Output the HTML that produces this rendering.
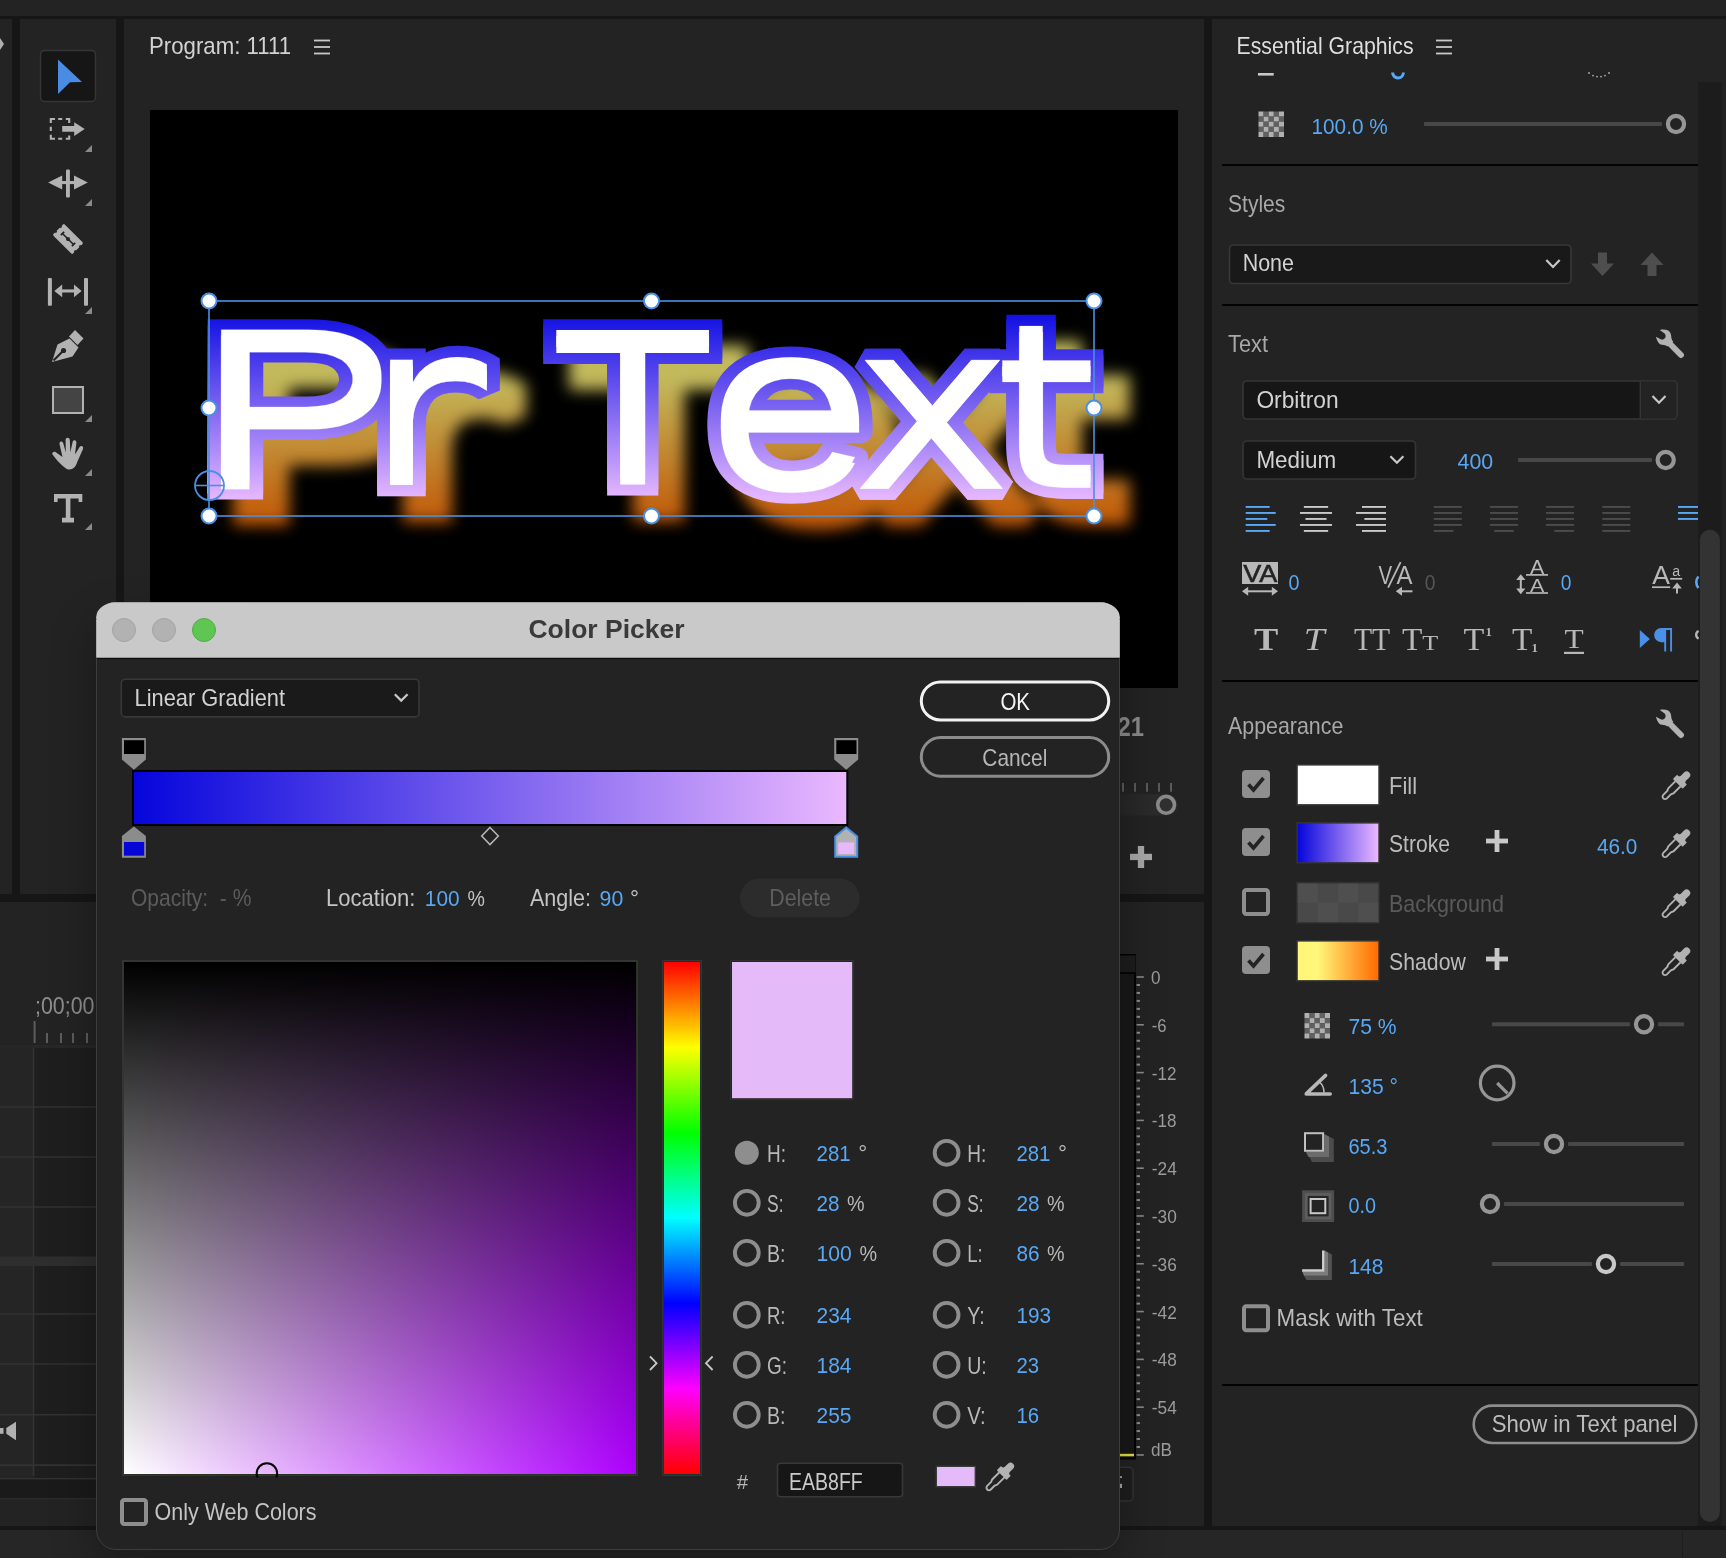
<!DOCTYPE html>
<html lang="en"><head><meta charset="utf-8"><title>Color Picker</title>
<style>html,body{margin:0;padding:0;background:#161616;overflow:hidden}svg{display:block;will-change:transform}svg text{font-family:"Liberation Sans",sans-serif;white-space:pre}.pt text{vector-effect:non-scaling-stroke;font-size:100px}.pt .dj{font-family:"DejaVu Sans",sans-serif}.pt .dm{font-family:"DejaVu Sans Mono",monospace}.pt .lm{font-family:"Liberation Mono",monospace}.pt .rj{stroke-linejoin:round}</style></head><body>
<svg width="1726" height="1558" viewBox="0 0 1726 1558">
<!-- sec_layout -->
<rect x="0" y="0" width="1726" height="1558" fill="#161616" />
<rect x="0" y="0" width="1726" height="16" fill="#232323" />
<rect x="0" y="19" width="12" height="875" fill="#232323" />
<polygon points="0,38 4,44 0,50" fill="#b0b0b0" />
<rect x="20" y="19" width="96" height="875" fill="#232323" />
<rect x="124" y="19" width="1080" height="875" fill="#232323" />
<rect x="1212" y="19" width="514" height="1507" fill="#232323" />
<rect x="0" y="902" width="1112" height="624" fill="#232323" />
<rect x="1112" y="902" width="92" height="624" fill="#232323" />
<rect x="0" y="1530" width="1726" height="28" fill="#262626" />
<line x1="1682.5" y1="1530" x2="1682.5" y2="1558" stroke="#1e1e1e" stroke-width="1" />
<!-- sec_tools -->
<rect x="40.5" y="50.5" width="55" height="51" fill="#161616" rx="4" stroke="#363636" stroke-width="1.5" />
<polygon points="58,59.5 82,82 70,82.3 58,94" fill="#4a8ce4" />
<path d="M50.8,123 V119 H55 M58.2,119 H62.2 M65.8,119 H69.2 V123 M50.8,126.8 V131 M50.8,134.8 V138.8 H55 M58.2,138.8 H62.2 M65.8,138.8 H69.2 V135.4" fill="none" stroke="#b2b2b2" stroke-width="2.1"/>
<polygon points="62.2,126.1 74.2,126.1 74.2,122.3 84.7,129 74.2,136 74.2,131.7 62.2,131.7" fill="#b2b2b2" />
<polygon points="92,145 92,152 85,152" fill="#8a8a8a" />
<rect x="66" y="169.6" width="3.9" height="28" fill="#b2b2b2" rx="1" />
<polygon points="48.1,182.5 62.2,175.5 62.2,189.6" fill="#b2b2b2" />
<polygon points="87.8,182.5 74,175.5 74,189.6" fill="#b2b2b2" />
<rect x="62" y="181" width="12.2" height="3.1" fill="#b2b2b2" />
<polygon points="92,199 92,206 85,206" fill="#8a8a8a" />
<g transform="translate(68,239) rotate(45)"><rect x="-13.8" y="-8" width="27.6" height="16" rx="1.5" fill="#b2b2b2"/><path d="M-7.5,0 H7.5" stroke="#232323" stroke-width="1.6" fill="none"/><circle cx="0" cy="0" r="2" fill="#232323"/><path d="M-7.8,-2.3 V2.3 M7.8,-2.3 V2.3" stroke="#232323" stroke-width="1.8"/><circle cx="-13.8" cy="-3.5" r="1.2" fill="#232323"/><circle cx="-13.8" cy="3.5" r="1.2" fill="#232323"/><circle cx="13.8" cy="-3.5" r="1.2" fill="#232323"/><circle cx="13.8" cy="3.5" r="1.2" fill="#232323"/></g>
<rect x="47.9" y="278" width="4" height="27.8" fill="#b2b2b2" rx="1" />
<rect x="84" y="278" width="4" height="27.8" fill="#b2b2b2" rx="1" />
<rect x="60" y="289.4" width="16" height="3.1" fill="#b2b2b2" />
<polygon points="54.3,290.9 62.2,284.6 62.2,297.2" fill="#b2b2b2" />
<polygon points="81.6,290.9 74,284.6 74,297.2" fill="#b2b2b2" />
<polygon points="92,307 92,314 85,314" fill="#8a8a8a" />
<g transform="translate(52,362)"><path d="M0,0 L5.5,-17.5 L17.5,-23.5 L26.5,-14.5 L20.5,-5.5 Z" fill="#b2b2b2"/><path d="M1.5,-1.5 L11,-11" stroke="#232323" stroke-width="2.2"/><circle cx="11.5" cy="-11.5" r="2.6" fill="#232323"/><path d="M17,-25.5 L23,-32 L31.5,-23.5 L25.5,-17 Z" fill="#b2b2b2"/></g>
<rect x="53" y="387" width="30" height="26" fill="#444" stroke="#b2b2b2" stroke-width="2" />
<polygon points="92,415 92,422 85,422" fill="#8a8a8a" />
<g transform="translate(52,437.5)" fill="#b2b2b2"><path d="M14,31 C8,27 3,20 0.5,17 C-0.5,15.5 1.5,13.5 3.5,14.5 L10.5,19.5 L7.5,6.5 C7,3.5 10.5,3 11.2,5.5 L13.8,15 L13.6,2.5 C13.6,-0.6 17.6,-0.6 17.8,2.5 L18.4,14.8 L20.6,4.5 C21.2,1.8 24.8,2.4 24.4,5.2 L23,17 L27.6,9.6 C29,7.4 32,9 31,11.4 L25,25 C24,29 21,32 17.5,32 C16,32 15,31.8 14,31 Z"/></g>
<polygon points="92,469 92,476 85,476" fill="#8a8a8a" />
<path d="M54,494 H82.3 V502 H78.6 V498.6 H70.4 V517.8 H74 V522.4 H62 V517.8 H65.8 V498.6 H57.6 V502 H54 Z" fill="#b2b2b2"/>
<polygon points="92,523 92,530 85,530" fill="#8a8a8a" />
<!-- sec_program -->
<text x="149" y="54" font-size="23.6" fill="#d2d2d2" textLength="142" lengthAdjust="spacingAndGlyphs" >Program: 1111</text>
<line x1="314" y1="40.5" x2="330" y2="40.5" stroke="#c8c8c8" stroke-width="1.8" />
<line x1="314" y1="47" x2="330" y2="47" stroke="#c8c8c8" stroke-width="1.8" />
<line x1="314" y1="53.5" x2="330" y2="53.5" stroke="#c8c8c8" stroke-width="1.8" />
<rect x="150" y="110" width="1028" height="578" fill="#000" />
<defs><linearGradient id="gs" gradientUnits="userSpaceOnUse" x1="0" y1="310" x2="0" y2="497"><stop offset="0" stop-color="#0c0ce2"/><stop offset="1" stop-color="#e4b6ff"/></linearGradient><linearGradient id="gsh" gradientUnits="userSpaceOnUse" x1="0" y1="315" x2="0" y2="500"><stop offset="0" stop-color="#fff47a"/><stop offset="0.2" stop-color="#fff47a"/><stop offset="1" stop-color="#ff7208"/></linearGradient><clipPath id="vclip"><rect x="150" y="110" width="1028" height="578"/></clipPath><filter id="shblur" x="-10%" y="-30%" width="120%" height="160%"><feGaussianBlur stdDeviation="7.5"/></filter><mask id="mstroke" maskUnits="userSpaceOnUse" x="150" y="110" width="1028" height="578"><g class="pt" fill="#fff" stroke="#fff" stroke-width="24.4" stroke-linejoin="miter" stroke-miterlimit="2"><text transform="matrix(3.0085 0 0 2.2318 196.56 483.18)">P</text><text class="dm" transform="matrix(2.4974 0 0 2.1732 345.92 479.43)">r</text> <text class="dj" transform="matrix(2.4708 0 0 2.0343 557.17 478.68)">T</text><text class="rj" transform="matrix(2.9436 0 0 2.3641 708.41 484.56)">e</text><text class="dj" transform="matrix(2.6840 0 0 2.3455 852.44 488.43)">x</text><text class="dj" transform="matrix(2.5777 0 0 2.2158 995.47 481.68)">t</text></g>
<g class="pt" fill="#fff" stroke="#fff" stroke-width="24.4" stroke-linejoin="miter" stroke-miterlimit="2"><text transform="matrix(3.0085 0 0 2.2318 196.56 489.18)">P</text><text class="dm" transform="matrix(2.4974 0 0 2.1732 345.92 485.43)">r</text> <text class="dj" transform="matrix(2.4708 0 0 2.0343 557.17 484.68)">T</text><text class="rj" transform="matrix(2.9436 0 0 2.3641 708.41 490.56)">e</text><text class="dj" transform="matrix(2.6840 0 0 2.3455 852.44 488.43)">x</text><text class="dj" transform="matrix(2.5777 0 0 2.2158 995.47 487.68)">t</text></g>
</mask></defs>
<g clip-path="url(#vclip)" font-family='"Liberation Sans", sans-serif'>
<g filter="url(#shblur)" opacity="0.76"><g transform="translate(26,26)"><rect x="150" y="110" width="1028" height="578" fill="url(#gsh)" mask="url(#mstroke)"/></g></g>
<rect x="150" y="110" width="1028" height="578" fill="url(#gs)" mask="url(#mstroke)"/>
<g class="pt" fill="#fff" stroke="#fff" stroke-width="0.25"><text transform="matrix(3.0085 0 0 2.2318 196.56 483.18)">P</text><text class="dm" transform="matrix(2.4974 0 0 2.1732 345.92 479.43)">r</text> <text class="dj" transform="matrix(2.4708 0 0 2.0343 557.17 478.68)">T</text><text class="rj" transform="matrix(2.9436 0 0 2.3641 708.41 484.56)">e</text><text class="dj" transform="matrix(2.6840 0 0 2.3455 852.44 488.43)">x</text><text class="dj" transform="matrix(2.5777 0 0 2.2158 995.47 481.68)">t</text></g>
<g class="pt" fill="#fff" stroke="#fff" stroke-width="0.25"><text transform="matrix(3.0085 0 0 2.2318 196.56 489.18)">P</text><text class="dm" transform="matrix(2.4974 0 0 2.1732 345.92 485.43)">r</text> <text class="dj" transform="matrix(2.4708 0 0 2.0343 557.17 484.68)">T</text><text class="rj" transform="matrix(2.9436 0 0 2.3641 708.41 490.56)">e</text><text class="dj" transform="matrix(2.6840 0 0 2.3455 852.44 488.43)">x</text><text class="dj" transform="matrix(2.5777 0 0 2.2158 995.47 487.68)">t</text></g>

</g>
<rect x="209" y="301" width="885" height="215" fill="none" stroke="#4a90e2" stroke-width="1.6"/>
<circle cx="209.5" cy="485.5" r="14.5" fill="none" stroke="#4a90e2" stroke-width="1.8" />
<line x1="196" y1="485.5" x2="223" y2="485.5" stroke="#4a90e2" stroke-width="1.6" />
<circle cx="209" cy="301" r="7.5" fill="#fff" stroke="#4a90e2" stroke-width="2" />
<circle cx="651.5" cy="301" r="7.5" fill="#fff" stroke="#4a90e2" stroke-width="2" />
<circle cx="1094" cy="301" r="7.5" fill="#fff" stroke="#4a90e2" stroke-width="2" />
<circle cx="209" cy="408" r="7.5" fill="#fff" stroke="#4a90e2" stroke-width="2" />
<circle cx="1094" cy="408" r="7.5" fill="#fff" stroke="#4a90e2" stroke-width="2" />
<circle cx="209" cy="516" r="7.5" fill="#fff" stroke="#4a90e2" stroke-width="2" />
<circle cx="651.5" cy="516" r="7.5" fill="#fff" stroke="#4a90e2" stroke-width="2" />
<circle cx="1094" cy="516" r="7.5" fill="#fff" stroke="#4a90e2" stroke-width="2" />
<text x="1117.5" y="735.9" font-size="27" fill="#8c8c8c" textLength="26.5" lengthAdjust="spacingAndGlyphs" font-weight="bold" >21</text>
<line x1="1123" y1="783" x2="1123" y2="791.7" stroke="#5a5a5a" stroke-width="2" />
<line x1="1135" y1="783" x2="1135" y2="791.7" stroke="#5a5a5a" stroke-width="2" />
<line x1="1147" y1="783" x2="1147" y2="791.7" stroke="#5a5a5a" stroke-width="2" />
<line x1="1159" y1="783" x2="1159" y2="791.7" stroke="#5a5a5a" stroke-width="2" />
<line x1="1171" y1="783" x2="1171" y2="791.7" stroke="#5a5a5a" stroke-width="2" />
<defs><linearGradient id="zs" x1="0" x2="1"><stop offset="0" stop-color="#262626"/><stop offset="1" stop-color="#2e2e2e"/></linearGradient></defs>
<rect x="1110" y="794.2" width="67.5" height="21.2" fill="url(#zs)" rx="10.6" />
<circle cx="1166.1" cy="804.8" r="8.4" fill="#303030" stroke="#8a8a8a" stroke-width="3.6" />
<rect x="1130" y="853.8" width="22" height="6.3" fill="#a8a8a8" />
<rect x="1137.85" y="846" width="6.3" height="22" fill="#a8a8a8" />
<!-- sec_eg -->
<text x="1236.5" y="54.3" font-size="23.6" fill="#dedede" textLength="177" lengthAdjust="spacingAndGlyphs" >Essential Graphics</text>
<line x1="1436" y1="40.5" x2="1452" y2="40.5" stroke="#c8c8c8" stroke-width="1.8" />
<line x1="1436" y1="47" x2="1452" y2="47" stroke="#c8c8c8" stroke-width="1.8" />
<line x1="1436" y1="53.5" x2="1452" y2="53.5" stroke="#c8c8c8" stroke-width="1.8" />
<rect x="1258" y="73" width="15.7" height="2.6" fill="#c8c8c8" />
<path d="M1392.6,72.6 A5.4,5.4 0 0 0 1403.4,72.6" fill="none" stroke="#58a8f5" stroke-width="3" />
<circle cx="1589" cy="73" r="0.9" fill="#b0b0b0" />
<circle cx="1593" cy="75.6" r="0.9" fill="#b0b0b0" />
<circle cx="1597" cy="76.6" r="0.9" fill="#b0b0b0" />
<circle cx="1601" cy="76.6" r="0.9" fill="#b0b0b0" />
<circle cx="1605" cy="75.6" r="0.9" fill="#b0b0b0" />
<circle cx="1609" cy="73" r="0.9" fill="#b0b0b0" />
<rect x="1698.1" y="82.1" width="23.6" height="1444" fill="#1c1c1c" />
<rect x="1699.9" y="529.8" width="20" height="992.2" fill="#333" rx="10" />
<rect x="1258.5" y="111.5" width="5.1" height="5.1" fill="#b0b0b0" />
<rect x="1258.5" y="116.6" width="5.1" height="5.1" fill="#606060" />
<rect x="1258.5" y="121.7" width="5.1" height="5.1" fill="#b0b0b0" />
<rect x="1258.5" y="126.8" width="5.1" height="5.1" fill="#606060" />
<rect x="1258.5" y="131.9" width="5.1" height="5.1" fill="#b0b0b0" />
<rect x="1263.6" y="111.5" width="5.1" height="5.1" fill="#606060" />
<rect x="1263.6" y="116.6" width="5.1" height="5.1" fill="#b0b0b0" />
<rect x="1263.6" y="121.7" width="5.1" height="5.1" fill="#606060" />
<rect x="1263.6" y="126.8" width="5.1" height="5.1" fill="#b0b0b0" />
<rect x="1263.6" y="131.9" width="5.1" height="5.1" fill="#606060" />
<rect x="1268.7" y="111.5" width="5.1" height="5.1" fill="#b0b0b0" />
<rect x="1268.7" y="116.6" width="5.1" height="5.1" fill="#606060" />
<rect x="1268.7" y="121.7" width="5.1" height="5.1" fill="#b0b0b0" />
<rect x="1268.7" y="126.8" width="5.1" height="5.1" fill="#606060" />
<rect x="1268.7" y="131.9" width="5.1" height="5.1" fill="#b0b0b0" />
<rect x="1273.8" y="111.5" width="5.1" height="5.1" fill="#606060" />
<rect x="1273.8" y="116.6" width="5.1" height="5.1" fill="#b0b0b0" />
<rect x="1273.8" y="121.7" width="5.1" height="5.1" fill="#606060" />
<rect x="1273.8" y="126.8" width="5.1" height="5.1" fill="#b0b0b0" />
<rect x="1273.8" y="131.9" width="5.1" height="5.1" fill="#606060" />
<rect x="1278.9" y="111.5" width="5.1" height="5.1" fill="#b0b0b0" />
<rect x="1278.9" y="116.6" width="5.1" height="5.1" fill="#606060" />
<rect x="1278.9" y="121.7" width="5.1" height="5.1" fill="#b0b0b0" />
<rect x="1278.9" y="126.8" width="5.1" height="5.1" fill="#606060" />
<rect x="1278.9" y="131.9" width="5.1" height="5.1" fill="#b0b0b0" />
<text x="1311.5" y="133.8" font-size="22.6" fill="#58a8f5" textLength="76.3" lengthAdjust="spacingAndGlyphs" >100.0 %</text>
<rect x="1424" y="122" width="238" height="4" fill="#484848" rx="1" />
<circle cx="1676" cy="124" r="8.1" fill="none" stroke="#969696" stroke-width="4.2" />
<rect x="1222" y="164" width="476" height="2" fill="#020202" />
<text x="1228" y="212" font-size="23.6" fill="#a8a8a8" textLength="57.3" lengthAdjust="spacingAndGlyphs" >Styles</text>
<rect x="1229.5" y="245" width="341.5" height="38.5" fill="#191919" rx="4" stroke="#383838" stroke-width="1.6" />
<text x="1242.7" y="271.3" font-size="23.6" fill="#d2d2d2" textLength="51.3" lengthAdjust="spacingAndGlyphs" >None</text>
<path d="M1546.3,260.1 L1553,266.9 L1559.7,260.1" fill="none" stroke="#c8c8c8" stroke-width="2.2" stroke-linejoin="miter"/>
<path d="M1598,252.5 h9 v11 h7 l-11.5,12.5 l-11.5,-12.5 h7 z" fill="#4e4e4e" />
<path d="M1647.5,276 h9 v-11 h7 l-11.5,-12.5 l-11.5,12.5 h7 z" fill="#4e4e4e" />
<rect x="1222" y="304" width="476" height="2" fill="#020202" />
<text x="1228" y="352" font-size="23.6" fill="#a8a8a8" textLength="40" lengthAdjust="spacingAndGlyphs" >Text</text>
<g transform="translate(1645,320)"><path d="M14.8,9.9 C17.5,9.4 20.5,9.4 22.6,10.3 C25,11.4 26,13.6 26.2,16.2 C26.4,18.6 26.9,20.2 28.4,21.8 L22.4,26.6 C21,25.4 19.5,25 17,24.8 C14.2,24.5 12.2,21.5 10.9,16.7 L16.2,19.6 C17.5,20 19,19.3 20,18 C21,16.6 20.8,14.6 19.6,13.4 Z" fill="#b2b2b2"/><path d="M25.4,24.2 L36,35" stroke="#b2b2b2" stroke-width="5.9" stroke-linecap="round"/></g>
<rect x="1243" y="381" width="434" height="38" fill="#161616" rx="4" stroke="#363636" stroke-width="1.6" />
<line x1="1640.4" y1="381" x2="1640.4" y2="419" stroke="#363636" stroke-width="1.6" />
<rect x="1641.2" y="381.8" width="35" height="36.4" fill="#232323" rx="3" />
<text x="1256.4" y="408.2" font-size="23.6" fill="#d2d2d2" textLength="82.3" lengthAdjust="spacingAndGlyphs" >Orbitron</text>
<path d="M1652.5,396.1 L1659,402.7 L1665.5,396.1" fill="none" stroke="#c8c8c8" stroke-width="2.2" stroke-linejoin="miter"/>
<rect x="1243" y="441" width="172.5" height="38" fill="#161616" rx="4" stroke="#363636" stroke-width="1.6" />
<text x="1256.4" y="468.2" font-size="23.6" fill="#d2d2d2" textLength="79.8" lengthAdjust="spacingAndGlyphs" >Medium</text>
<path d="M1390.4,456.2 L1396.9,462.8 L1403.4,456.2" fill="none" stroke="#c8c8c8" stroke-width="2.2" stroke-linejoin="miter"/>
<text x="1457.5" y="469.3" font-size="22.6" fill="#58a8f5" textLength="35.7" lengthAdjust="spacingAndGlyphs" >400</text>
<rect x="1518" y="458" width="134" height="4" fill="#484848" rx="1" />
<circle cx="1665.7" cy="460" r="8.1" fill="none" stroke="#969696" stroke-width="4.2" />
<rect x="1245.7" y="506" width="24" height="1.9" fill="#58a8f5" />
<rect x="1245.7" y="512" width="30" height="1.9" fill="#58a8f5" />
<rect x="1245.7" y="518" width="21.6" height="1.9" fill="#58a8f5" />
<rect x="1245.7" y="524" width="30" height="1.9" fill="#58a8f5" />
<rect x="1245.7" y="530" width="24" height="1.9" fill="#58a8f5" />
<rect x="1303.84" y="506" width="24.32" height="1.9" fill="#c8c8c8" />
<rect x="1300" y="512" width="32" height="1.9" fill="#c8c8c8" />
<rect x="1305.44" y="518" width="21.12" height="1.9" fill="#c8c8c8" />
<rect x="1300" y="524" width="32" height="1.9" fill="#c8c8c8" />
<rect x="1303.84" y="530" width="24.32" height="1.9" fill="#c8c8c8" />
<rect x="1362" y="506" width="24" height="1.9" fill="#c8c8c8" />
<rect x="1356" y="512" width="30" height="1.9" fill="#c8c8c8" />
<rect x="1364.4" y="518" width="21.6" height="1.9" fill="#c8c8c8" />
<rect x="1356" y="524" width="30" height="1.9" fill="#c8c8c8" />
<rect x="1362" y="530" width="24" height="1.9" fill="#c8c8c8" />
<rect x="1433.8" y="506" width="28" height="1.9" fill="#4c4c4c" />
<rect x="1433.8" y="512" width="28" height="1.9" fill="#4c4c4c" />
<rect x="1433.8" y="518" width="28" height="1.9" fill="#4c4c4c" />
<rect x="1433.8" y="524" width="28" height="1.9" fill="#4c4c4c" />
<rect x="1433.8" y="530" width="19.6" height="1.9" fill="#4c4c4c" />
<rect x="1490" y="506" width="28" height="1.9" fill="#4c4c4c" />
<rect x="1490" y="512" width="28" height="1.9" fill="#4c4c4c" />
<rect x="1490" y="518" width="28" height="1.9" fill="#4c4c4c" />
<rect x="1490" y="524" width="28" height="1.9" fill="#4c4c4c" />
<rect x="1494.2" y="530" width="19.6" height="1.9" fill="#4c4c4c" />
<rect x="1546" y="506" width="28" height="1.9" fill="#4c4c4c" />
<rect x="1546" y="512" width="28" height="1.9" fill="#4c4c4c" />
<rect x="1546" y="518" width="28" height="1.9" fill="#4c4c4c" />
<rect x="1546" y="524" width="28" height="1.9" fill="#4c4c4c" />
<rect x="1554.4" y="530" width="19.6" height="1.9" fill="#4c4c4c" />
<rect x="1602.3" y="506" width="28" height="1.9" fill="#4c4c4c" />
<rect x="1602.3" y="512" width="28" height="1.9" fill="#4c4c4c" />
<rect x="1602.3" y="518" width="28" height="1.9" fill="#4c4c4c" />
<rect x="1602.3" y="524" width="28" height="1.9" fill="#4c4c4c" />
<rect x="1602.3" y="530" width="28" height="1.9" fill="#4c4c4c" />
<rect x="1678" y="506" width="20" height="1.9" fill="#58a8f5" />
<rect x="1678" y="512" width="20" height="1.9" fill="#58a8f5" />
<rect x="1678" y="518" width="20" height="1.9" fill="#58a8f5" />
<rect x="1242" y="562" width="36" height="22" fill="#b8b8b8" />
<text x="1243.2" y="582.4" font-size="24.5" fill="#232323" textLength="34" lengthAdjust="spacingAndGlyphs" stroke="#232323" stroke-width="0.6">VA</text>
<line x1="1245" y1="591.3" x2="1275" y2="591.3" stroke="#b8b8b8" stroke-width="2" />
<polygon points="1242,591.3 1248.2,586.8 1248.2,595.8" fill="#b8b8b8" />
<polygon points="1278,591.3 1271.8,586.8 1271.8,595.8" fill="#b8b8b8" />
<text x="1288.6" y="589.7" font-size="21.5" fill="#58a8f5" textLength="11" lengthAdjust="spacingAndGlyphs" >0</text>
<text x="1378.4" y="583.8" font-size="25" fill="#b8b8b8" textLength="13.6" lengthAdjust="spacingAndGlyphs" >V</text>
<text x="1396.5" y="583.8" font-size="25" fill="#b8b8b8" textLength="16" lengthAdjust="spacingAndGlyphs" >A</text>
<line x1="1388.1" y1="587.6" x2="1400.6" y2="562.2" stroke="#b8b8b8" stroke-width="1.8" />
<line x1="1400" y1="591.3" x2="1412.5" y2="591.3" stroke="#b8b8b8" stroke-width="2" />
<polygon points="1395.8,591.3 1402,586.8 1402,595.8" fill="#b8b8b8" />
<text x="1424.7" y="589.7" font-size="21.5" fill="#565656" textLength="10.7" lengthAdjust="spacingAndGlyphs" >0</text>
<line x1="1520.8" y1="578" x2="1520.8" y2="590.5" stroke="#b8b8b8" stroke-width="2" />
<polygon points="1520.8,574.3 1516.2,580 1525.4,580" fill="#b8b8b8" />
<polygon points="1520.8,594.2 1516.2,588.5 1525.4,588.5" fill="#b8b8b8" />
<text x="1530" y="574" font-size="19.5" fill="#b8b8b8" textLength="14.3" lengthAdjust="spacingAndGlyphs" >A</text>
<line x1="1526" y1="574.9" x2="1548" y2="574.9" stroke="#b8b8b8" stroke-width="1.7" />
<text x="1530" y="592" font-size="18.3" fill="#b8b8b8" textLength="14.3" lengthAdjust="spacingAndGlyphs" >A</text>
<line x1="1526" y1="593" x2="1548" y2="593" stroke="#b8b8b8" stroke-width="1.7" />
<text x="1560.8" y="589.7" font-size="21.5" fill="#58a8f5" textLength="10.7" lengthAdjust="spacingAndGlyphs" >0</text>
<text x="1652.3" y="584.4" font-size="25" fill="#b8b8b8" textLength="17.7" lengthAdjust="spacingAndGlyphs" >A</text>
<text x="1672.3" y="575.7" font-size="15.5" fill="#b8b8b8" textLength="7.9" lengthAdjust="spacingAndGlyphs" >a</text>
<line x1="1652" y1="587.2" x2="1670.2" y2="587.2" stroke="#b8b8b8" stroke-width="1.7" />
<line x1="1670.2" y1="578.8" x2="1682.2" y2="578.8" stroke="#b8b8b8" stroke-width="1.7" />
<line x1="1677" y1="586" x2="1677" y2="593.6" stroke="#b8b8b8" stroke-width="2" />
<polygon points="1677,582.6 1672.2,588.6 1681.8,588.6" fill="#b8b8b8" />
<path d="M1698.4,576.5 A9,9 0 0 0 1698.4,588" fill="none" stroke="#58a8f5" stroke-width="2.6" />
<text x="1253.9" y="650" font-size="31" fill="#b8b8b8" textLength="24.3" lengthAdjust="spacingAndGlyphs" font-weight="bold" style='font-family:"Liberation Serif", serif' >T</text>
<text x="1303.7" y="650" font-size="31" fill="#b8b8b8" textLength="20.9" lengthAdjust="spacingAndGlyphs" style='font-family:"Liberation Serif", serif' font-style="italic">T</text>
<text x="1354" y="650" font-size="31" fill="#b8b8b8" textLength="36.2" lengthAdjust="spacingAndGlyphs" style='font-family:"Liberation Serif", serif' >TT</text>
<text x="1402" y="650" font-size="31" fill="#b8b8b8" textLength="20.3" lengthAdjust="spacingAndGlyphs" style='font-family:"Liberation Serif", serif' >T</text>
<text x="1422.2" y="650" font-size="21" fill="#b8b8b8" textLength="16" lengthAdjust="spacingAndGlyphs" style='font-family:"Liberation Serif", serif' >T</text>
<text x="1463.6" y="650" font-size="31" fill="#b8b8b8" textLength="20.8" lengthAdjust="spacingAndGlyphs" style='font-family:"Liberation Serif", serif' >T</text>
<text x="1485.6" y="636.3" font-size="11.5" fill="#b8b8b8" textLength="6.4" lengthAdjust="spacingAndGlyphs" font-weight="bold" style='font-family:"Liberation Serif", serif' >1</text>
<text x="1512" y="650" font-size="31" fill="#b8b8b8" textLength="20.3" lengthAdjust="spacingAndGlyphs" style='font-family:"Liberation Serif", serif' >T</text>
<text x="1531.6" y="651.5" font-size="11.5" fill="#b8b8b8" textLength="6.4" lengthAdjust="spacingAndGlyphs" font-weight="bold" style='font-family:"Liberation Serif", serif' >1</text>
<text x="1564.4" y="648" font-size="28" fill="#b8b8b8" textLength="19.2" lengthAdjust="spacingAndGlyphs" style='font-family:"Liberation Serif", serif' >T</text>
<line x1="1564" y1="652.9" x2="1584" y2="652.9" stroke="#b8b8b8" stroke-width="2.2" />
<polygon points="1639.8,630 1649.9,639 1639.8,648" fill="#4a90e8" />
<path d="M1661,629 H1672 M1665.2,629 V651.5 M1671.1,629 V651.5" fill="none" stroke="#4a90e8" stroke-width="1.9" />
<path d="M1665.5,628 h-4.3 a7.1,7.1 0 0 0 0,14.2 h4.3 z" fill="#4a90e8" />
<path d="M1698.6,631 A4.2,4.2 0 0 0 1698.6,638.6" fill="none" stroke="#b8b8b8" stroke-width="2.4" />
<rect x="1222" y="680" width="476" height="2" fill="#020202" />
<text x="1228" y="734.3" font-size="23.6" fill="#a8a8a8" textLength="115.3" lengthAdjust="spacingAndGlyphs" >Appearance</text>
<g transform="translate(1645,700)"><path d="M14.8,9.9 C17.5,9.4 20.5,9.4 22.6,10.3 C25,11.4 26,13.6 26.2,16.2 C26.4,18.6 26.9,20.2 28.4,21.8 L22.4,26.6 C21,25.4 19.5,25 17,24.8 C14.2,24.5 12.2,21.5 10.9,16.7 L16.2,19.6 C17.5,20 19,19.3 20,18 C21,16.6 20.8,14.6 19.6,13.4 Z" fill="#b2b2b2"/><path d="M25.4,24.2 L36,35" stroke="#b2b2b2" stroke-width="5.9" stroke-linecap="round"/></g>
<defs><linearGradient id="gst" x1="0" x2="1"><stop offset="0" stop-color="#0606dc"/><stop offset="1" stop-color="#eab8ff"/></linearGradient><linearGradient id="gshw" x1="0" x2="1"><stop offset="0" stop-color="#fff67a"/><stop offset="0.25" stop-color="#fff67a"/><stop offset="1" stop-color="#ff6a00"/></linearGradient></defs>
<rect x="1242" y="770" width="28" height="28" fill="#8e8e8e" rx="4" />
<path d="M1248.5,784.5 L1253.5,790 L1263.5,778" fill="none" stroke="#232323" stroke-width="3.6" stroke-linejoin="miter"/>
<rect x="1296.3" y="764" width="83.4" height="41.6" fill="#333" />
<rect x="1297.8" y="765.6" width="80.5" height="38.5" fill="#fff" />
<text x="1389" y="793.8" font-size="23.6" fill="#bcbcbc" textLength="28" lengthAdjust="spacingAndGlyphs" >Fill</text>
<g transform="translate(1665.1,796.6) rotate(-45)"><path d="M18.3,-3.6 L8,-3.6 L5.6,-2.55 L0,-2.55 A2.55,2.55 0 0 0 0,2.55 L5.6,2.55 L8,3.6 L18.3,3.6" fill="none" stroke="#b2b2b2" stroke-width="1.9" stroke-linejoin="round"/><rect x="17.9" y="-6.9" width="6" height="13.8" rx="0.7" fill="#b2b2b2"/><path d="M23,-5 L25.5,-3.6 H30.4 A3.6,3.6 0 0 1 30.4,3.6 H25.5 L23,5 Z" fill="#b2b2b2"/></g>
<rect x="1242" y="828" width="28" height="28" fill="#8e8e8e" rx="4" />
<path d="M1248.5,842.5 L1253.5,848 L1263.5,836" fill="none" stroke="#232323" stroke-width="3.6" stroke-linejoin="miter"/>
<rect x="1296.3" y="822" width="83.4" height="41.6" fill="#333" />
<rect x="1297.8" y="823.6" width="80.5" height="38.5" fill="url(#gst)" />
<text x="1389" y="851.8" font-size="23.6" fill="#bcbcbc" textLength="61" lengthAdjust="spacingAndGlyphs" >Stroke</text>
<g transform="translate(1665.1,854.6) rotate(-45)"><path d="M18.3,-3.6 L8,-3.6 L5.6,-2.55 L0,-2.55 A2.55,2.55 0 0 0 0,2.55 L5.6,2.55 L8,3.6 L18.3,3.6" fill="none" stroke="#b2b2b2" stroke-width="1.9" stroke-linejoin="round"/><rect x="17.9" y="-6.9" width="6" height="13.8" rx="0.7" fill="#b2b2b2"/><path d="M23,-5 L25.5,-3.6 H30.4 A3.6,3.6 0 0 1 30.4,3.6 H25.5 L23,5 Z" fill="#b2b2b2"/></g>
<rect x="1244" y="890" width="24" height="24" fill="none" rx="2.2" stroke="#8e8e8e" stroke-width="4" />
<rect x="1296.3" y="882" width="83.4" height="41.6" fill="#333" />
<rect x="1297.8" y="883.6" width="80.5" height="38.5" fill="#494949" />
<rect x="1297.8" y="883.6" width="20.125" height="19.25" fill="#4f4f4f" />
<rect x="1317.92" y="902.85" width="20.125" height="19.25" fill="#4f4f4f" />
<rect x="1338.05" y="883.6" width="20.125" height="19.25" fill="#4f4f4f" />
<rect x="1358.17" y="902.85" width="20.125" height="19.25" fill="#4f4f4f" />
<text x="1389" y="911.8" font-size="23.6" fill="#5a5a5a" textLength="115" lengthAdjust="spacingAndGlyphs" >Background</text>
<g transform="translate(1665.1,914.6) rotate(-45)"><path d="M18.3,-3.6 L8,-3.6 L5.6,-2.55 L0,-2.55 A2.55,2.55 0 0 0 0,2.55 L5.6,2.55 L8,3.6 L18.3,3.6" fill="none" stroke="#b2b2b2" stroke-width="1.9" stroke-linejoin="round"/><rect x="17.9" y="-6.9" width="6" height="13.8" rx="0.7" fill="#b2b2b2"/><path d="M23,-5 L25.5,-3.6 H30.4 A3.6,3.6 0 0 1 30.4,3.6 H25.5 L23,5 Z" fill="#b2b2b2"/></g>
<rect x="1242" y="946" width="28" height="28" fill="#8e8e8e" rx="4" />
<path d="M1248.5,960.5 L1253.5,966 L1263.5,954" fill="none" stroke="#232323" stroke-width="3.6" stroke-linejoin="miter"/>
<rect x="1296.3" y="940" width="83.4" height="41.6" fill="#333" />
<rect x="1297.8" y="941.6" width="80.5" height="38.5" fill="url(#gshw)" />
<text x="1389" y="969.8" font-size="23.6" fill="#bcbcbc" textLength="76.8" lengthAdjust="spacingAndGlyphs" >Shadow</text>
<g transform="translate(1665.1,972.6) rotate(-45)"><path d="M18.3,-3.6 L8,-3.6 L5.6,-2.55 L0,-2.55 A2.55,2.55 0 0 0 0,2.55 L5.6,2.55 L8,3.6 L18.3,3.6" fill="none" stroke="#b2b2b2" stroke-width="1.9" stroke-linejoin="round"/><rect x="17.9" y="-6.9" width="6" height="13.8" rx="0.7" fill="#b2b2b2"/><path d="M23,-5 L25.5,-3.6 H30.4 A3.6,3.6 0 0 1 30.4,3.6 H25.5 L23,5 Z" fill="#b2b2b2"/></g>
<rect x="1486" y="838.6" width="22" height="4.8" fill="#c8c8c8" />
<rect x="1494.6" y="830" width="4.8" height="22" fill="#c8c8c8" />
<rect x="1486" y="956.6" width="22" height="4.8" fill="#c8c8c8" />
<rect x="1494.6" y="948" width="4.8" height="22" fill="#c8c8c8" />
<text x="1597" y="853.8" font-size="22.6" fill="#58a8f5" textLength="40.4" lengthAdjust="spacingAndGlyphs" >46.0</text>
<rect x="1304.5" y="1013" width="5.1" height="5.1" fill="#b0b0b0" />
<rect x="1304.5" y="1018.1" width="5.1" height="5.1" fill="#606060" />
<rect x="1304.5" y="1023.2" width="5.1" height="5.1" fill="#b0b0b0" />
<rect x="1304.5" y="1028.3" width="5.1" height="5.1" fill="#606060" />
<rect x="1304.5" y="1033.4" width="5.1" height="5.1" fill="#b0b0b0" />
<rect x="1309.6" y="1013" width="5.1" height="5.1" fill="#606060" />
<rect x="1309.6" y="1018.1" width="5.1" height="5.1" fill="#b0b0b0" />
<rect x="1309.6" y="1023.2" width="5.1" height="5.1" fill="#606060" />
<rect x="1309.6" y="1028.3" width="5.1" height="5.1" fill="#b0b0b0" />
<rect x="1309.6" y="1033.4" width="5.1" height="5.1" fill="#606060" />
<rect x="1314.7" y="1013" width="5.1" height="5.1" fill="#b0b0b0" />
<rect x="1314.7" y="1018.1" width="5.1" height="5.1" fill="#606060" />
<rect x="1314.7" y="1023.2" width="5.1" height="5.1" fill="#b0b0b0" />
<rect x="1314.7" y="1028.3" width="5.1" height="5.1" fill="#606060" />
<rect x="1314.7" y="1033.4" width="5.1" height="5.1" fill="#b0b0b0" />
<rect x="1319.8" y="1013" width="5.1" height="5.1" fill="#606060" />
<rect x="1319.8" y="1018.1" width="5.1" height="5.1" fill="#b0b0b0" />
<rect x="1319.8" y="1023.2" width="5.1" height="5.1" fill="#606060" />
<rect x="1319.8" y="1028.3" width="5.1" height="5.1" fill="#b0b0b0" />
<rect x="1319.8" y="1033.4" width="5.1" height="5.1" fill="#606060" />
<rect x="1324.9" y="1013" width="5.1" height="5.1" fill="#b0b0b0" />
<rect x="1324.9" y="1018.1" width="5.1" height="5.1" fill="#606060" />
<rect x="1324.9" y="1023.2" width="5.1" height="5.1" fill="#b0b0b0" />
<rect x="1324.9" y="1028.3" width="5.1" height="5.1" fill="#606060" />
<rect x="1324.9" y="1033.4" width="5.1" height="5.1" fill="#b0b0b0" />
<text x="1348.4" y="1034.4" font-size="22.6" fill="#58a8f5" textLength="48.2" lengthAdjust="spacingAndGlyphs" >75 %</text>
<rect x="1492" y="1022.2" width="138" height="4" fill="#484848" rx="1" />
<rect x="1658" y="1022.2" width="26" height="4" fill="#484848" rx="1" />
<circle cx="1644" cy="1024.2" r="8.1" fill="none" stroke="#969696" stroke-width="4.2" />
<path d="M1306.2,1094 H1330.2 M1306.4,1093.6 L1325.6,1075.4" fill="none" stroke="#b8b8b8" stroke-width="3.6" stroke-linecap="round" stroke-linejoin="round"/>
<path d="M1319.5,1082 A13.5,13.5 0 0 1 1324,1092.4" fill="none" stroke="#b8b8b8" stroke-width="1.6" />
<text x="1348.4" y="1094.4" font-size="22.6" fill="#58a8f5" textLength="49.6" lengthAdjust="spacingAndGlyphs" >135 °</text>
<circle cx="1497.2" cy="1083" r="16.8" fill="none" stroke="#969696" stroke-width="3.2" />
<line x1="1497.2" y1="1083" x2="1507.5" y2="1093.3" stroke="#969696" stroke-width="3.2" />
<polygon points="1309.5,1157 1312,1162 1333.8,1162 1333.8,1139 1329,1136.5 1329,1157" fill="#4c4c4c" />
<polygon points="1306,1152 1308.5,1157 1329,1157 1329,1136.5 1324.2,1134 1324.2,1152" fill="#6c6c6c" />
<rect x="1305" y="1133.2" width="18.1" height="17.6" fill="#232323" stroke="#c0c0c0" stroke-width="2" />
<text x="1348.4" y="1153.8" font-size="22.6" fill="#58a8f5" textLength="39" lengthAdjust="spacingAndGlyphs" >65.3</text>
<rect x="1492" y="1142" width="48" height="4" fill="#484848" rx="1" />
<rect x="1568" y="1142" width="116" height="4" fill="#484848" rx="1" />
<circle cx="1554" cy="1144" r="8.1" fill="none" stroke="#969696" stroke-width="4.2" />
<rect x="1302.1" y="1190.3" width="32" height="31.7" fill="#4e4e4e" />
<rect x="1304.9" y="1193.1" width="26.4" height="26.1" fill="#5e5e5e" />
<rect x="1307.7" y="1195.9" width="20.9" height="20.5" fill="#262626" />
<rect x="1310.6" y="1199" width="14.7" height="14.2" fill="#232323" stroke="#c8c8c8" stroke-width="2" />
<text x="1348.4" y="1213.4" font-size="22.6" fill="#58a8f5" textLength="27.6" lengthAdjust="spacingAndGlyphs" >0.0</text>
<rect x="1504" y="1202" width="180" height="4" fill="#484848" rx="1" />
<circle cx="1490" cy="1204" r="8.1" fill="none" stroke="#969696" stroke-width="4.2" />
<polygon points="1304,1275.7 1306.5,1280 1331.9,1280 1331.9,1254.5 1328.2,1252.5 1328.2,1275.7" fill="#525252" />
<polygon points="1302.3,1271.6 1304,1275.7 1328.2,1275.7 1328.2,1252.5 1324.5,1250.5 1324.5,1271.6" fill="#7c7c7c" />
<path d="M1302.1,1270.4 H1323.3 V1250.5" fill="none" stroke="#d0d0d0" stroke-width="2.5" />
<text x="1348.4" y="1273.6" font-size="22.6" fill="#58a8f5" textLength="35.1" lengthAdjust="spacingAndGlyphs" >148</text>
<rect x="1492" y="1262" width="100" height="4" fill="#484848" rx="1" />
<rect x="1620" y="1262" width="64" height="4" fill="#484848" rx="1" />
<circle cx="1606" cy="1264" r="8.1" fill="none" stroke="#c8c8c8" stroke-width="4.2" />
<rect x="1244" y="1306.3" width="24" height="24" fill="none" rx="2.2" stroke="#8e8e8e" stroke-width="4" />
<text x="1276.6" y="1326.4" font-size="23.6" fill="#bcbcbc" textLength="146.2" lengthAdjust="spacingAndGlyphs" >Mask with Text</text>
<rect x="1222" y="1384" width="476" height="2" fill="#020202" />
<rect x="1473.7" y="1405.6" width="222.6" height="37.4" fill="none" rx="18.7" stroke="#8e8e8e" stroke-width="2.6" />
<text x="1491.7" y="1432.3" font-size="23.6" fill="#bcbcbc" textLength="185.7" lengthAdjust="spacingAndGlyphs" >Show in Text panel</text>
<!-- sec_timeline -->
<text x="35" y="1014" font-size="23.6" fill="#8e8e8e" textLength="59.5" lengthAdjust="spacingAndGlyphs" >;00;00</text>
<line x1="34.6" y1="1021" x2="34.6" y2="1043" stroke="#5c5c5c" stroke-width="2" />
<line x1="47" y1="1033" x2="47" y2="1043" stroke="#5c5c5c" stroke-width="2" />
<line x1="61" y1="1033" x2="61" y2="1043" stroke="#5c5c5c" stroke-width="2" />
<line x1="73" y1="1033" x2="73" y2="1043" stroke="#5c5c5c" stroke-width="2" />
<line x1="87" y1="1033" x2="87" y2="1043" stroke="#5c5c5c" stroke-width="2" />
<rect x="0" y="1045" width="1112" height="3" fill="#272727" />
<rect x="0" y="1048" width="33" height="431" fill="#252525" />
<rect x="34" y="1048" width="1078" height="431" fill="#1e1e1e" />
<line x1="33.5" y1="1048" x2="33.5" y2="1476" stroke="#343434" stroke-width="1.6" />
<line x1="0" y1="1107" x2="1112" y2="1107" stroke="#323232" stroke-width="1.6" />
<line x1="0" y1="1157" x2="1112" y2="1157" stroke="#323232" stroke-width="1.6" />
<line x1="0" y1="1207" x2="1112" y2="1207" stroke="#323232" stroke-width="1.6" />
<line x1="0" y1="1314" x2="1112" y2="1314" stroke="#323232" stroke-width="1.6" />
<line x1="0" y1="1364" x2="1112" y2="1364" stroke="#323232" stroke-width="1.6" />
<line x1="0" y1="1414.8" x2="1112" y2="1414.8" stroke="#323232" stroke-width="1.6" />
<line x1="0" y1="1465.1" x2="1112" y2="1465.1" stroke="#323232" stroke-width="1.6" />
<rect x="0" y="1256.5" width="1112" height="9.5" fill="#2e2e2e" />
<line x1="0" y1="1478.8" x2="1112" y2="1478.8" stroke="#323232" stroke-width="1.6" />
<rect x="0" y="1479.6" width="1112" height="18.6" fill="#1a1a1a" />
<line x1="0" y1="1498.8" x2="1112" y2="1498.8" stroke="#2c2c2c" stroke-width="1.6" />
<rect x="0" y="1499.6" width="1112" height="26.4" fill="#232323" />
<rect x="0" y="1428" width="3.5" height="5.8" fill="#b0b0b0" />
<polygon points="6.3,1428 16,1421.7 16,1440.2 6.3,1433.8" fill="#b0b0b0" />
<rect x="1112" y="955" width="23" height="503.5" fill="#181818" stroke="#030303" stroke-width="2" />
<rect x="1112" y="955.5" width="23.6" height="17" fill="#1d1d1d" />
<line x1="1112" y1="973" x2="1135" y2="973" stroke="#050505" stroke-width="2" />
<rect x="1112" y="1453.8" width="22" height="2.5" fill="#e6e23c" />
<line x1="1136.6" y1="977" x2="1143.8" y2="977" stroke="#8c8c8c" stroke-width="1.6" />
<line x1="1136.6" y1="984.966" x2="1140" y2="984.966" stroke="#8c8c8c" stroke-width="2" />
<line x1="1136.6" y1="992.932" x2="1140" y2="992.932" stroke="#8c8c8c" stroke-width="2" />
<line x1="1136.6" y1="1000.9" x2="1140" y2="1000.9" stroke="#8c8c8c" stroke-width="2" />
<line x1="1136.6" y1="1008.86" x2="1140" y2="1008.86" stroke="#8c8c8c" stroke-width="2" />
<line x1="1136.6" y1="1016.83" x2="1140" y2="1016.83" stroke="#8c8c8c" stroke-width="2" />
<line x1="1136.6" y1="1024.8" x2="1143.8" y2="1024.8" stroke="#8c8c8c" stroke-width="1.6" />
<line x1="1136.6" y1="1032.76" x2="1140" y2="1032.76" stroke="#8c8c8c" stroke-width="2" />
<line x1="1136.6" y1="1040.73" x2="1140" y2="1040.73" stroke="#8c8c8c" stroke-width="2" />
<line x1="1136.6" y1="1048.69" x2="1140" y2="1048.69" stroke="#8c8c8c" stroke-width="2" />
<line x1="1136.6" y1="1056.66" x2="1140" y2="1056.66" stroke="#8c8c8c" stroke-width="2" />
<line x1="1136.6" y1="1064.63" x2="1140" y2="1064.63" stroke="#8c8c8c" stroke-width="2" />
<line x1="1136.6" y1="1072.59" x2="1143.8" y2="1072.59" stroke="#8c8c8c" stroke-width="1.6" />
<line x1="1136.6" y1="1080.56" x2="1140" y2="1080.56" stroke="#8c8c8c" stroke-width="2" />
<line x1="1136.6" y1="1088.52" x2="1140" y2="1088.52" stroke="#8c8c8c" stroke-width="2" />
<line x1="1136.6" y1="1096.49" x2="1140" y2="1096.49" stroke="#8c8c8c" stroke-width="2" />
<line x1="1136.6" y1="1104.46" x2="1140" y2="1104.46" stroke="#8c8c8c" stroke-width="2" />
<line x1="1136.6" y1="1112.42" x2="1140" y2="1112.42" stroke="#8c8c8c" stroke-width="2" />
<line x1="1136.6" y1="1120.39" x2="1143.8" y2="1120.39" stroke="#8c8c8c" stroke-width="1.6" />
<line x1="1136.6" y1="1128.35" x2="1140" y2="1128.35" stroke="#8c8c8c" stroke-width="2" />
<line x1="1136.6" y1="1136.32" x2="1140" y2="1136.32" stroke="#8c8c8c" stroke-width="2" />
<line x1="1136.6" y1="1144.29" x2="1140" y2="1144.29" stroke="#8c8c8c" stroke-width="2" />
<line x1="1136.6" y1="1152.25" x2="1140" y2="1152.25" stroke="#8c8c8c" stroke-width="2" />
<line x1="1136.6" y1="1160.22" x2="1140" y2="1160.22" stroke="#8c8c8c" stroke-width="2" />
<line x1="1136.6" y1="1168.18" x2="1143.8" y2="1168.18" stroke="#8c8c8c" stroke-width="1.6" />
<line x1="1136.6" y1="1176.15" x2="1140" y2="1176.15" stroke="#8c8c8c" stroke-width="2" />
<line x1="1136.6" y1="1184.12" x2="1140" y2="1184.12" stroke="#8c8c8c" stroke-width="2" />
<line x1="1136.6" y1="1192.08" x2="1140" y2="1192.08" stroke="#8c8c8c" stroke-width="2" />
<line x1="1136.6" y1="1200.05" x2="1140" y2="1200.05" stroke="#8c8c8c" stroke-width="2" />
<line x1="1136.6" y1="1208.01" x2="1140" y2="1208.01" stroke="#8c8c8c" stroke-width="2" />
<line x1="1136.6" y1="1215.98" x2="1143.8" y2="1215.98" stroke="#8c8c8c" stroke-width="1.6" />
<line x1="1136.6" y1="1223.95" x2="1140" y2="1223.95" stroke="#8c8c8c" stroke-width="2" />
<line x1="1136.6" y1="1231.91" x2="1140" y2="1231.91" stroke="#8c8c8c" stroke-width="2" />
<line x1="1136.6" y1="1239.88" x2="1140" y2="1239.88" stroke="#8c8c8c" stroke-width="2" />
<line x1="1136.6" y1="1247.84" x2="1140" y2="1247.84" stroke="#8c8c8c" stroke-width="2" />
<line x1="1136.6" y1="1255.81" x2="1140" y2="1255.81" stroke="#8c8c8c" stroke-width="2" />
<line x1="1136.6" y1="1263.78" x2="1143.8" y2="1263.78" stroke="#8c8c8c" stroke-width="1.6" />
<line x1="1136.6" y1="1271.74" x2="1140" y2="1271.74" stroke="#8c8c8c" stroke-width="2" />
<line x1="1136.6" y1="1279.71" x2="1140" y2="1279.71" stroke="#8c8c8c" stroke-width="2" />
<line x1="1136.6" y1="1287.67" x2="1140" y2="1287.67" stroke="#8c8c8c" stroke-width="2" />
<line x1="1136.6" y1="1295.64" x2="1140" y2="1295.64" stroke="#8c8c8c" stroke-width="2" />
<line x1="1136.6" y1="1303.61" x2="1140" y2="1303.61" stroke="#8c8c8c" stroke-width="2" />
<line x1="1136.6" y1="1311.57" x2="1143.8" y2="1311.57" stroke="#8c8c8c" stroke-width="1.6" />
<line x1="1136.6" y1="1319.54" x2="1140" y2="1319.54" stroke="#8c8c8c" stroke-width="2" />
<line x1="1136.6" y1="1327.5" x2="1140" y2="1327.5" stroke="#8c8c8c" stroke-width="2" />
<line x1="1136.6" y1="1335.47" x2="1140" y2="1335.47" stroke="#8c8c8c" stroke-width="2" />
<line x1="1136.6" y1="1343.44" x2="1140" y2="1343.44" stroke="#8c8c8c" stroke-width="2" />
<line x1="1136.6" y1="1351.4" x2="1140" y2="1351.4" stroke="#8c8c8c" stroke-width="2" />
<line x1="1136.6" y1="1359.37" x2="1143.8" y2="1359.37" stroke="#8c8c8c" stroke-width="1.6" />
<line x1="1136.6" y1="1367.33" x2="1140" y2="1367.33" stroke="#8c8c8c" stroke-width="2" />
<line x1="1136.6" y1="1375.3" x2="1140" y2="1375.3" stroke="#8c8c8c" stroke-width="2" />
<line x1="1136.6" y1="1383.27" x2="1140" y2="1383.27" stroke="#8c8c8c" stroke-width="2" />
<line x1="1136.6" y1="1391.23" x2="1140" y2="1391.23" stroke="#8c8c8c" stroke-width="2" />
<line x1="1136.6" y1="1399.2" x2="1140" y2="1399.2" stroke="#8c8c8c" stroke-width="2" />
<line x1="1136.6" y1="1407.16" x2="1143.8" y2="1407.16" stroke="#8c8c8c" stroke-width="1.6" />
<line x1="1136.6" y1="1415.13" x2="1140" y2="1415.13" stroke="#8c8c8c" stroke-width="2" />
<line x1="1136.6" y1="1423.1" x2="1140" y2="1423.1" stroke="#8c8c8c" stroke-width="2" />
<line x1="1136.6" y1="1431.06" x2="1140" y2="1431.06" stroke="#8c8c8c" stroke-width="2" />
<line x1="1136.6" y1="1439.03" x2="1140" y2="1439.03" stroke="#8c8c8c" stroke-width="2" />
<line x1="1136.6" y1="1446.99" x2="1140" y2="1446.99" stroke="#8c8c8c" stroke-width="2" />
<line x1="1136.6" y1="1454.96" x2="1143.8" y2="1454.96" stroke="#8c8c8c" stroke-width="1.6" />
<text x="1151" y="984" font-size="17.7" fill="#9c9c9c" textLength="9.5" lengthAdjust="spacingAndGlyphs" >0</text>
<text x="1151.8" y="1031.8" font-size="17.7" fill="#9c9c9c" textLength="14.8" lengthAdjust="spacingAndGlyphs" >-6</text>
<text x="1151.8" y="1079.6" font-size="17.7" fill="#9c9c9c" textLength="24.6" lengthAdjust="spacingAndGlyphs" >-12</text>
<text x="1151.8" y="1127.4" font-size="17.7" fill="#9c9c9c" textLength="24.6" lengthAdjust="spacingAndGlyphs" >-18</text>
<text x="1151.8" y="1175.2" font-size="17.7" fill="#9c9c9c" textLength="25" lengthAdjust="spacingAndGlyphs" >-24</text>
<text x="1151.8" y="1223" font-size="17.7" fill="#9c9c9c" textLength="25" lengthAdjust="spacingAndGlyphs" >-30</text>
<text x="1151.8" y="1270.8" font-size="17.7" fill="#9c9c9c" textLength="25" lengthAdjust="spacingAndGlyphs" >-36</text>
<text x="1151.8" y="1318.6" font-size="17.7" fill="#9c9c9c" textLength="25" lengthAdjust="spacingAndGlyphs" >-42</text>
<text x="1151.8" y="1366.4" font-size="17.7" fill="#9c9c9c" textLength="25" lengthAdjust="spacingAndGlyphs" >-48</text>
<text x="1151.8" y="1414.2" font-size="17.7" fill="#9c9c9c" textLength="25" lengthAdjust="spacingAndGlyphs" >-54</text>
<text x="1151" y="1455.7" font-size="17.7" fill="#9c9c9c" textLength="21" lengthAdjust="spacingAndGlyphs" >dB</text>
<rect x="1100" y="1467.2" width="33" height="33.8" fill="#1e1e1e" rx="4" stroke="#343434" stroke-width="1.6" />
<rect x="1119" y="1476.2" width="3" height="1.8" fill="#a8a8a8" />
<rect x="1119" y="1483.8" width="3" height="4.2" fill="#a8a8a8" />
<!-- sec_dialog -->
<defs><filter id="dsh" x="-15%" y="-15%" width="130%" height="135%"><feGaussianBlur stdDeviation="22"/></filter><clipPath id="dclip"><rect x="96" y="602" width="1024" height="948" rx="20"/></clipPath><linearGradient id="ggrad" x1="0" x2="1"><stop offset="0" stop-color="#0606dc"/><stop offset="1" stop-color="#eab8ff"/></linearGradient><linearGradient id="hue" x1="0" y1="0" x2="0" y2="1"><stop offset="0" stop-color="#ff0000"/><stop offset="0.1667" stop-color="#ffff00"/><stop offset="0.3333" stop-color="#00ff00"/><stop offset="0.5" stop-color="#00ffff"/><stop offset="0.6667" stop-color="#0000ff"/><stop offset="0.8333" stop-color="#ff00ff"/><stop offset="1" stop-color="#ff0000"/></linearGradient><linearGradient id="sat" x1="0" x2="1"><stop offset="0" stop-color="#ffffff"/><stop offset="1" stop-color="#ae00ff"/></linearGradient><linearGradient id="val" x1="0" y1="0" x2="0" y2="1"><stop offset="0" stop-color="#000" stop-opacity="1"/><stop offset="1" stop-color="#000" stop-opacity="0"/></linearGradient></defs>
<rect x="92" y="618" width="1032" height="952" rx="24" fill="#000" opacity="0.26" filter="url(#dsh)"/>
<g clip-path="url(#dclip)">
<rect x="96" y="602" width="1024" height="948" fill="#232323" />
<rect x="96" y="602" width="1024" height="56" fill="#c9c9c9" />
<rect x="96" y="657.5" width="1024" height="1.6" fill="#0e0e0e" />
</g>
<rect x="96.5" y="602.5" width="1023" height="947" rx="19.5" fill="none" stroke="#3e3e3e" stroke-width="1"/>
<rect x="96.2" y="602.3" width="1023.6" height="30" fill="#c9c9c9" rx="19.5" />
<rect x="96.2" y="620" width="1023.6" height="37.5" fill="#c9c9c9" />
<circle cx="124" cy="630" r="11.5" fill="#b2b2b2" stroke="#a2a2a2" stroke-width="1" />
<circle cx="164" cy="630" r="11.5" fill="#b2b2b2" stroke="#a2a2a2" stroke-width="1" />
<circle cx="204" cy="630" r="11.5" fill="#5fc553" stroke="#52ad47" stroke-width="1" />
<text x="528.5" y="638" font-size="26" fill="#3a3a3a" textLength="156" lengthAdjust="spacingAndGlyphs" font-weight="bold" >Color Picker</text>
<rect x="121.3" y="679.3" width="297.7" height="37.6" fill="#1a1a1a" rx="4" stroke="#383838" stroke-width="1.6" />
<text x="134.6" y="705.7" font-size="23.6" fill="#d2d2d2" textLength="150.4" lengthAdjust="spacingAndGlyphs" >Linear Gradient</text>
<path d="M394.8,694.2 L401.2,700.6 L407.6,694.2" fill="none" stroke="#c8c8c8" stroke-width="2.2" stroke-linejoin="miter"/>
<rect x="921.3" y="681.9" width="187.4" height="38" fill="none" rx="19" stroke="#f2f2f2" stroke-width="3" />
<text x="1000.4" y="710" font-size="23.6" fill="#f4f4f4" textLength="29.6" lengthAdjust="spacingAndGlyphs" >OK</text>
<rect x="921.3" y="737.6" width="187.4" height="38.6" fill="none" rx="19.3" stroke="#8c8c8c" stroke-width="3" />
<text x="982.3" y="765.5" font-size="23.6" fill="#b6b6b6" textLength="65" lengthAdjust="spacingAndGlyphs" >Cancel</text>
<rect x="132" y="770" width="716.3" height="56" fill="#000" />
<rect x="134" y="772" width="712.3" height="52" fill="url(#ggrad)" />
<polygon points="121.9,738.1 145.9,738.1 145.9,759.5 133.9,769.7 121.9,759.5" fill="#8c8c8c" />
<rect x="124" y="740.2" width="20.2" height="13.8" fill="#000" />
<polygon points="834.2,738.1 858.2,738.1 858.2,759.5 846.2,769.7 834.2,759.5" fill="#8c8c8c" />
<rect x="836.3" y="740.2" width="20.2" height="13.8" fill="#000" />
<polygon points="133.9,826.4 145.9,836 145.9,857.8 121.9,857.8 121.9,836" fill="#8c8c8c" />
<rect x="124" y="842" width="20.2" height="13.7" fill="#0606d6" />
<path d="M846.2,827.6 L857.2,836.4 V856.8 H835.2 V836.4 Z" fill="#b2b2b2" stroke="#4a90e2" stroke-width="2" />
<rect x="838.2" y="842.4" width="16" height="11.6" fill="#e6b8fc" />
<path d="M490,827.5 L498.3,836 L490,844.5 L481.7,836 Z" fill="none" stroke="#b4b4b4" stroke-width="1.6" />
<text x="131" y="906.3" font-size="23.6" fill="#5c5c5c" textLength="120.4" lengthAdjust="spacingAndGlyphs" >Opacity:  - %</text>
<text x="326" y="906.3" font-size="23.6" fill="#c4c4c4" textLength="89.4" lengthAdjust="spacingAndGlyphs" >Location:</text>
<text x="424.8" y="906.3" font-size="22.6" fill="#58a8f5" textLength="34.8" lengthAdjust="spacingAndGlyphs" >100</text>
<text x="467.6" y="906.3" font-size="22.6" fill="#c4c4c4" textLength="17.4" lengthAdjust="spacingAndGlyphs" >%</text>
<text x="530" y="906.3" font-size="23.6" fill="#c4c4c4" textLength="61" lengthAdjust="spacingAndGlyphs" >Angle:</text>
<text x="599.6" y="906.3" font-size="22.6" fill="#58a8f5" textLength="23.7" lengthAdjust="spacingAndGlyphs" >90</text>
<text x="630" y="906.3" font-size="22.6" fill="#c4c4c4" >°</text>
<rect x="740" y="878.5" width="119.6" height="39" fill="#2c2c2c" rx="19.5" />
<text x="769.3" y="906.3" font-size="23.6" fill="#5e5e5e" textLength="61.7" lengthAdjust="spacingAndGlyphs" >Delete</text>
<rect x="122" y="960" width="516" height="516" fill="#343434" />
<rect x="124" y="962" width="513" height="513" fill="#293322" />
<rect x="124" y="962" width="512" height="512" fill="url(#sat)" />
<rect x="124" y="962" width="512" height="512" fill="url(#val)" />
<clipPath id="cfc"><rect x="124" y="962" width="512" height="515.6"/></clipPath>
<g clip-path="url(#cfc)"><circle cx="266.9" cy="1473.5" r="10.25" fill="none" stroke="#000" stroke-width="2"/></g>
<rect x="662" y="960" width="40" height="516" fill="#343434" />
<rect x="663" y="961" width="38" height="514" fill="#24302e" />
<rect x="664" y="962" width="36" height="512" fill="url(#hue)" />
<path d="M650,1356.5 L656.6,1363.2 L650,1370" fill="none" stroke="#c8c8c8" stroke-width="1.8" />
<path d="M712.6,1356.5 L706,1363.2 L712.6,1370" fill="none" stroke="#c8c8c8" stroke-width="1.8" />
<rect x="730" y="960" width="124.2" height="140.2" fill="#303030" />
<rect x="731" y="961" width="122.2" height="138.2" fill="#242622" />
<rect x="732" y="962" width="120.2" height="136.2" fill="#e4bbf8" />
<circle cx="746.8" cy="1152.8" r="12" fill="#8e8e8e" />
<text x="767" y="1161.8" font-size="23.6" fill="#b8b8b8" textLength="19" lengthAdjust="spacingAndGlyphs" >H:</text>
<text x="816.5" y="1161" font-size="22.6" fill="#58a8f5" textLength="34.2" lengthAdjust="spacingAndGlyphs" >281</text>
<text x="858.2" y="1161" font-size="22.6" fill="#b8b8b8" >°</text>
<circle cx="946.6" cy="1152.8" r="11.9" fill="none" stroke="#8e8e8e" stroke-width="3.9" />
<text x="967.2" y="1161.8" font-size="23.6" fill="#b8b8b8" textLength="19" lengthAdjust="spacingAndGlyphs" >H:</text>
<text x="1016.4" y="1161" font-size="22.6" fill="#58a8f5" textLength="34.1" lengthAdjust="spacingAndGlyphs" >281</text>
<text x="1058" y="1161" font-size="22.6" fill="#b8b8b8" >°</text>
<circle cx="746.8" cy="1202.8" r="11.9" fill="none" stroke="#8e8e8e" stroke-width="3.9" />
<text x="767" y="1211.8" font-size="23.6" fill="#b8b8b8" textLength="16.5" lengthAdjust="spacingAndGlyphs" >S:</text>
<text x="816.5" y="1211" font-size="22.6" fill="#58a8f5" textLength="23" lengthAdjust="spacingAndGlyphs" >28</text>
<text x="847.1" y="1211" font-size="22.6" fill="#b8b8b8" textLength="17.6" lengthAdjust="spacingAndGlyphs" >%</text>
<circle cx="946.6" cy="1202.8" r="11.9" fill="none" stroke="#8e8e8e" stroke-width="3.9" />
<text x="967.2" y="1211.8" font-size="23.6" fill="#b8b8b8" textLength="16.5" lengthAdjust="spacingAndGlyphs" >S:</text>
<text x="1016.4" y="1211" font-size="22.6" fill="#58a8f5" textLength="23.1" lengthAdjust="spacingAndGlyphs" >28</text>
<text x="1047.1" y="1211" font-size="22.6" fill="#b8b8b8" textLength="17.6" lengthAdjust="spacingAndGlyphs" >%</text>
<circle cx="746.8" cy="1252.8" r="11.9" fill="none" stroke="#8e8e8e" stroke-width="3.9" />
<text x="767" y="1261.8" font-size="23.6" fill="#b8b8b8" textLength="18.5" lengthAdjust="spacingAndGlyphs" >B:</text>
<text x="816.5" y="1261" font-size="22.6" fill="#58a8f5" textLength="35.3" lengthAdjust="spacingAndGlyphs" >100</text>
<text x="859.4" y="1261" font-size="22.6" fill="#b8b8b8" textLength="17.6" lengthAdjust="spacingAndGlyphs" >%</text>
<circle cx="946.6" cy="1252.8" r="11.9" fill="none" stroke="#8e8e8e" stroke-width="3.9" />
<text x="967.2" y="1261.8" font-size="23.6" fill="#b8b8b8" textLength="15.5" lengthAdjust="spacingAndGlyphs" >L:</text>
<text x="1016.4" y="1261" font-size="22.6" fill="#58a8f5" textLength="23.1" lengthAdjust="spacingAndGlyphs" >86</text>
<text x="1047.1" y="1261" font-size="22.6" fill="#b8b8b8" textLength="17.6" lengthAdjust="spacingAndGlyphs" >%</text>
<circle cx="746.8" cy="1314.8" r="11.9" fill="none" stroke="#8e8e8e" stroke-width="3.9" />
<text x="767" y="1323.8" font-size="23.6" fill="#b8b8b8" textLength="18.5" lengthAdjust="spacingAndGlyphs" >R:</text>
<text x="816.5" y="1323" font-size="22.6" fill="#58a8f5" textLength="35" lengthAdjust="spacingAndGlyphs" >234</text>
<circle cx="946.6" cy="1314.8" r="11.9" fill="none" stroke="#8e8e8e" stroke-width="3.9" />
<text x="967.2" y="1323.8" font-size="23.6" fill="#b8b8b8" textLength="17.5" lengthAdjust="spacingAndGlyphs" >Y:</text>
<text x="1016.4" y="1323" font-size="22.6" fill="#58a8f5" textLength="34.6" lengthAdjust="spacingAndGlyphs" >193</text>
<circle cx="746.8" cy="1364.8" r="11.9" fill="none" stroke="#8e8e8e" stroke-width="3.9" />
<text x="767" y="1373.8" font-size="23.6" fill="#b8b8b8" textLength="20" lengthAdjust="spacingAndGlyphs" >G:</text>
<text x="816.5" y="1373" font-size="22.6" fill="#58a8f5" textLength="35" lengthAdjust="spacingAndGlyphs" >184</text>
<circle cx="946.6" cy="1364.8" r="11.9" fill="none" stroke="#8e8e8e" stroke-width="3.9" />
<text x="967.2" y="1373.8" font-size="23.6" fill="#b8b8b8" textLength="19.5" lengthAdjust="spacingAndGlyphs" >U:</text>
<text x="1016.4" y="1373" font-size="22.6" fill="#58a8f5" textLength="22.6" lengthAdjust="spacingAndGlyphs" >23</text>
<circle cx="746.8" cy="1414.8" r="11.9" fill="none" stroke="#8e8e8e" stroke-width="3.9" />
<text x="767" y="1423.8" font-size="23.6" fill="#b8b8b8" textLength="18.5" lengthAdjust="spacingAndGlyphs" >B:</text>
<text x="816.5" y="1423" font-size="22.6" fill="#58a8f5" textLength="35" lengthAdjust="spacingAndGlyphs" >255</text>
<circle cx="946.6" cy="1414.8" r="11.9" fill="none" stroke="#8e8e8e" stroke-width="3.9" />
<text x="967.2" y="1423.8" font-size="23.6" fill="#b8b8b8" textLength="18.5" lengthAdjust="spacingAndGlyphs" >V:</text>
<text x="1016.4" y="1423" font-size="22.6" fill="#58a8f5" textLength="22.6" lengthAdjust="spacingAndGlyphs" >16</text>
<text x="736.7" y="1489.3" font-size="20" fill="#b8b8b8" textLength="11.3" lengthAdjust="spacingAndGlyphs" >#</text>
<rect x="777.5" y="1463.3" width="125" height="33.5" fill="#161616" rx="3" stroke="#383838" stroke-width="1.6" />
<text x="789" y="1490" font-size="23.6" fill="#cacaca" textLength="73.8" lengthAdjust="spacingAndGlyphs" >EAB8FF</text>
<rect x="936.3" y="1466.3" width="39" height="20.4" fill="#e4bbf8" stroke="#3a3a3a" stroke-width="1.4" />
<g transform="translate(989,1487.7) rotate(-45)"><path d="M18.3,-3.6 L8,-3.6 L5.6,-2.55 L0,-2.55 A2.55,2.55 0 0 0 0,2.55 L5.6,2.55 L8,3.6 L18.3,3.6" fill="none" stroke="#b2b2b2" stroke-width="1.9" stroke-linejoin="round"/><rect x="17.9" y="-6.9" width="6" height="13.8" rx="0.7" fill="#b2b2b2"/><path d="M23,-5 L25.5,-3.6 H30.4 A3.6,3.6 0 0 1 30.4,3.6 H25.5 L23,5 Z" fill="#b2b2b2"/></g>
<rect x="122" y="1500" width="24" height="24" fill="none" rx="2.2" stroke="#8e8e8e" stroke-width="4" />
<text x="154.5" y="1520.3" font-size="23.6" fill="#c4c4c4" textLength="162" lengthAdjust="spacingAndGlyphs" >Only Web Colors</text>
</svg></body></html>
